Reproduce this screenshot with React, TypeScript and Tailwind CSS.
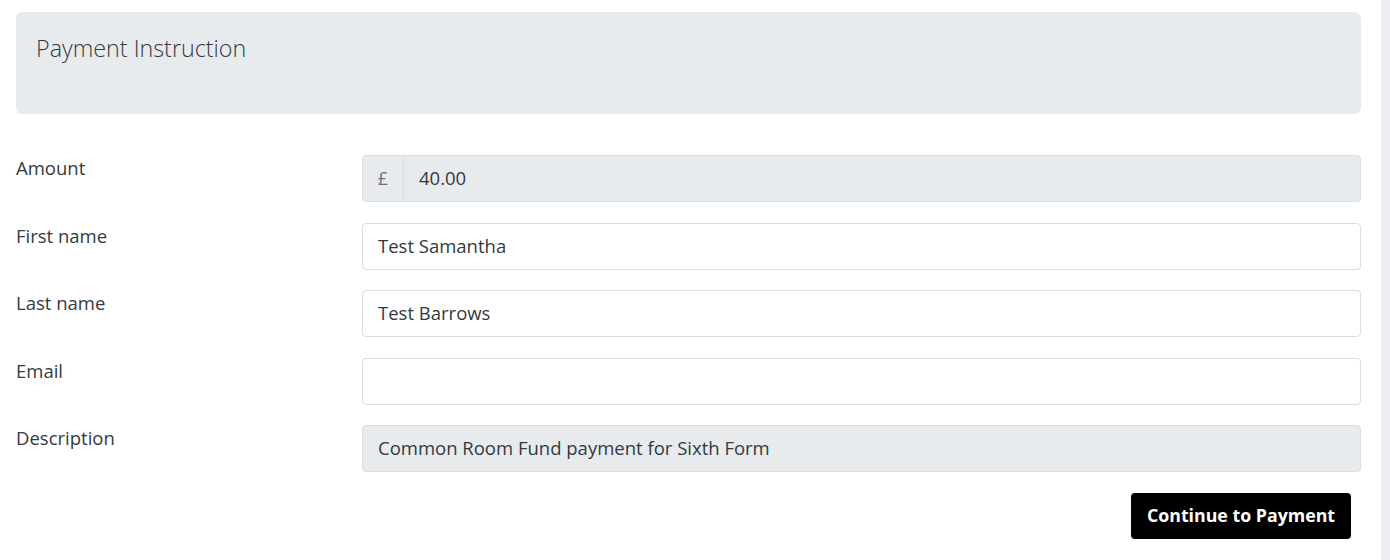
import React from 'react';

const font = { fontFamily: '"Open Sans", "Liberation Sans", sans-serif' };

const inputCls = 'w-full h-[47px] rounded-[4px] border border-[#d6dee6] pl-[15px] pr-4 pb-[2px] text-[18.5px] text-[#333a40] outline-none';

function Row({ label, children }: { label: string; children: React.ReactNode }) {
  return (
    <>
      <label className="text-[18.5px] text-[#333a40] leading-[26px]">{label}</label>
      {children}
    </>
  );
}

export default function App() {
  return (
    <div className="flex w-[1390px] h-[560px] bg-white overflow-hidden" style={font}>
      <div className="flex-1 pl-4 pr-5 pt-3">
        <div className="h-[102px] rounded-md bg-[#e8ebee] px-5 pt-[21px]">
          <h2 className="text-[23.3px] font-light text-[#333a40] leading-[30px]">Payment Instruction</h2>
        </div>

        <div className="grid grid-cols-[346px_1fr] gap-y-[20.5px] mt-[41px]">
          <Row label="Amount">
            <div className="flex h-[47px] rounded-[4px] border border-[#d6dee6] bg-[#e8ebee]">
              <span className="w-[41px] flex items-center justify-center border-r border-[#d6dee6] text-[18px] text-[#6c757d]">£</span>
              <span className="flex items-center pl-[15px] pb-[2px] text-[18.5px] text-[#333a40]">40.00</span>
            </div>
          </Row>
          <Row label="First name">
            <input className={inputCls} defaultValue="Test Samantha" />
          </Row>
          <Row label="Last name">
            <input className={inputCls} defaultValue="Test Barrows" />
          </Row>
          <Row label="Email">
            <input className={inputCls} defaultValue="" />
          </Row>
          <Row label="Description">
            <input className={`${inputCls} bg-[#e8ebee]`} defaultValue="Common Room Fund payment for Sixth Form" readOnly />
          </Row>
        </div>

        <div className="flex justify-end pr-[10px] mt-[21px]">
          <button className="w-[220px] h-[46px] rounded-[4px] bg-black text-white text-[17.75px] font-bold pb-[2px]">Continue to Payment</button>
        </div>
      </div>
      <div className="w-[9px] bg-[#eceef2]" />
    </div>
  );
}
